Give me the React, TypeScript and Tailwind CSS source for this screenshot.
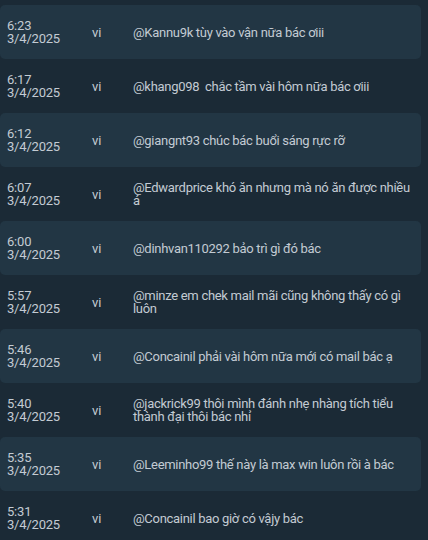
import React from "react";

const rows = [
  ["6:23", "@Kannu9k tùy vào vận nữa bác ơiii"],
  ["6:17", "@khang098  chắc tầm vài hôm nữa bác ơiii"],
  ["6:12", "@giangnt93 chúc bác buổi sáng rực rỡ"],
  ["6:07", "@Edwardprice khó ăn nhưng mà nó ăn được nhiều á"],
  ["6:00", "@dinhvan110292 bảo trì gì đó bác"],
  ["5:57", "@minze em chek mail mãi cũng không thấy có gì luôn"],
  ["5:46", "@Concainil phải vài hôm nữa mới có mail bác ạ"],
  ["5:40", "@jackrick99 thôi mình đánh nhẹ nhàng tích tiểu thành đại thôi bác nhỉ"],
  ["5:35", "@Leeminho99 thế này là max win luôn rồi à bác"],
  ["5:31", "@Concainil bao giờ có vậjy bác"],
];

export default function App() {
  return (
    <div
      className="w-[428px] h-[540px] overflow-hidden bg-[#1b2a36] pt-[5px] text-[13px] text-[#c3cbd3]"
      style={{ fontFamily: 'Roboto, "Liberation Sans", Arial, sans-serif' }}
    >
      <div className="w-[421px] flex flex-col">
        {rows.map(([t, m], i) => (
          <div
            key={i}
            className={
              i % 2 === 0
                ? "h-[54px] flex items-center rounded-[5px] bg-[#223644] pl-[7px] pr-[8px]"
                : "h-[54px] flex items-center rounded-[5px] pl-[7px] pr-[8px]"
            }
          >
            <div className="w-[85px] shrink-0 leading-[13px] tracking-[-0.2px]">
              {t}
              <br />
              3/4/2025
            </div>
            <div className="w-[41px] shrink-0 leading-[13px]">vi</div>
            <div className="flex-1 leading-[13px] tracking-[-0.3px] whitespace-pre-wrap">{m}</div>
          </div>
        ))}
      </div>
    </div>
  );
}
